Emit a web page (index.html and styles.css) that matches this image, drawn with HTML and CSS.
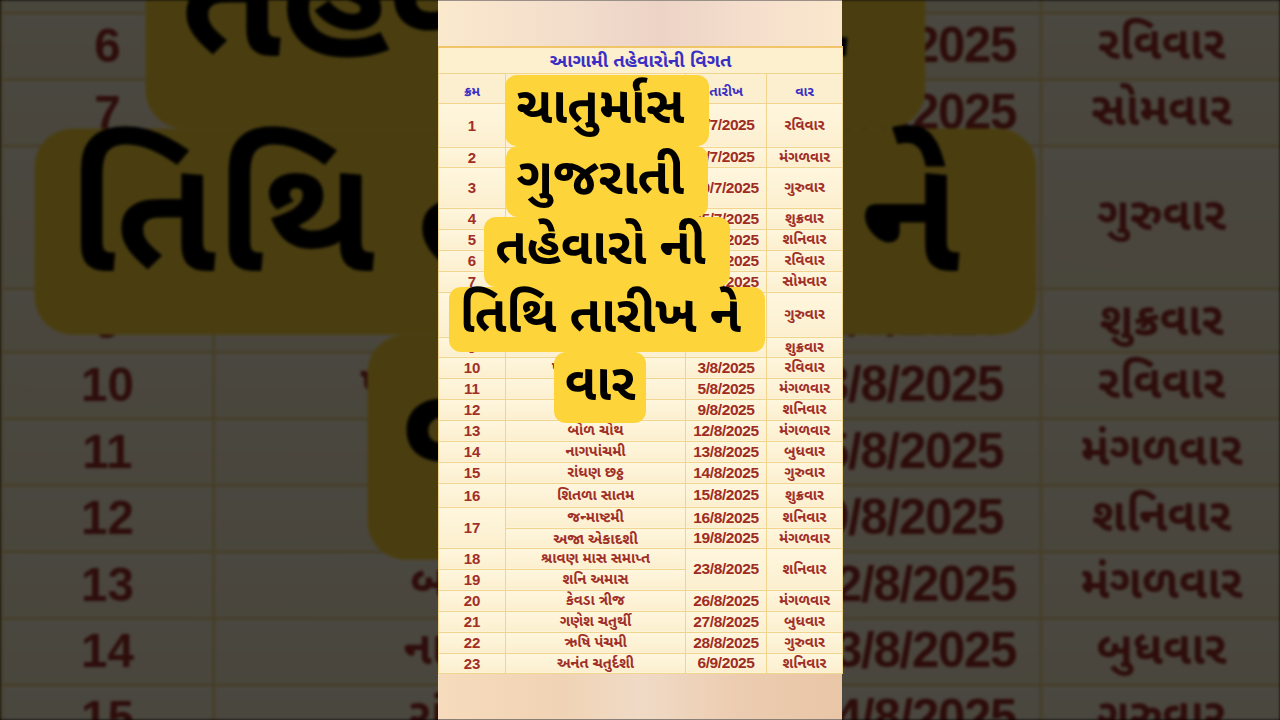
FILE: index.html
```html
<!DOCTYPE html>
<html lang="gu">
<head>
<meta charset="utf-8">
<title>ચાતુર્માસ ગુજરાતી તહેવારો</title>
<link rel="stylesheet" href="styles.css">
</head>
<body>
<div class="stage">
  <div class="backdrop" aria-hidden="true"></div>
  <div class="frame">
    <div class="glow-top"></div>
    <table class="fest">
      <colgroup><col class="c1"><col class="c2"><col class="c3"><col class="c4"></colgroup>
      <thead>
        <tr><th colspan="4" class="title">આગામી તહેવારોની વિગત</th></tr>
        <tr class="head"><th>ક્રમ</th><th>તહેવાર</th><th>તારીખ</th><th>વાર</th></tr>
      </thead>
      <tbody>
        <tr class="h44"><td>1</td><td>દેવપોઢી એકાદશી</td><td class="d">6/7/2025</td><td>રવિવાર</td></tr>
        <tr class="h20"><td>2</td><td>જયાપાર્વતી વ્રત</td><td class="d">8/7/2025</td><td>મંગળવાર</td></tr>
        <tr class="h41"><td>3</td><td>ગુરુ પૂર્ણિમા</td><td class="d">10/7/2025</td><td>ગુરુવાર</td></tr>
        <tr><td>4</td><td>દિવાસો</td><td class="d">25/7/2025</td><td>શુક્રવાર</td></tr>
        <tr><td>5</td><td>શ્રાવણ માસ પ્રારંભ</td><td class="d">26/7/2025</td><td>શનિવાર</td></tr>
        <tr><td>6</td><td>ફૂલકાજળી વ્રત</td><td class="d">27/7/2025</td><td>રવિવાર</td></tr>
        <tr><td>7</td><td>શ્રાવણ સોમવાર</td><td class="d">28/7/2025</td><td>સોમવાર</td></tr>
        <tr class="h45"><td>8</td><td>તુલસીદાસ જયંતી</td><td class="d">31/7/2025</td><td>ગુરુવાર</td></tr>
        <tr class="h20"><td>9</td><td>ગોગા નોમ</td><td class="d">1/8/2025</td><td>શુક્રવાર</td></tr>
        <tr><td>10</td><td>પવિત્રા એકાદશી</td><td class="d">3/8/2025</td><td>રવિવાર</td></tr>
        <tr><td>11</td><td>પ્રદોષ વ્રત</td><td class="d">5/8/2025</td><td>મંગળવાર</td></tr>
        <tr><td>12</td><td>રક્ષાબંધન</td><td class="d">9/8/2025</td><td>શનિવાર</td></tr>
        <tr><td>13</td><td>બોળ ચોથ</td><td class="d">12/8/2025</td><td>મંગળવાર</td></tr>
        <tr><td>14</td><td>નાગપાંચમી</td><td class="d">13/8/2025</td><td>બુધવાર</td></tr>
        <tr><td>15</td><td>રાંધણ છઠ્ઠ</td><td class="d">14/8/2025</td><td>ગુરુવાર</td></tr>
        <tr class="h24"><td>16</td><td>શિતળા સાતમ</td><td class="d">15/8/2025</td><td>શુક્રવાર</td></tr>
        <tr><td rowspan="2">17</td><td>જન્માષ્ટમી</td><td class="d">16/8/2025</td><td>શનિવાર</td></tr>
        <tr class="h20"><td>અજા એકાદશી</td><td class="d">19/8/2025</td><td>મંગળવાર</td></tr>
        <tr><td>18</td><td>શ્રાવણ માસ સમાપ્ત</td><td class="d" rowspan="2">23/8/2025</td><td rowspan="2">શનિવાર</td></tr>
        <tr><td>19</td><td>શનિ અમાસ</td></tr>
        <tr><td>20</td><td>કેવડા ત્રીજ</td><td class="d">26/8/2025</td><td>મંગળવાર</td></tr>
        <tr><td>21</td><td>ગણેશ ચતુર્થી</td><td class="d">27/8/2025</td><td>બુધવાર</td></tr>
        <tr><td>22</td><td>ઋષિ પંચમી</td><td class="d">28/8/2025</td><td>ગુરુવાર</td></tr>
        <tr class="h20"><td>23</td><td>અનંત ચતુર્દશી</td><td class="d">6/9/2025</td><td>શનિવાર</td></tr>
      </tbody>
    </table>
    <div class="glow-bottom"></div>
    <div class="caption">
      <span class="line l1">ચાતુર્માસ </span>
      <span class="line l2">ગુજરાતી </span>
      <span class="line l3">તહેવારો ની </span>
      <span class="line l4">તિથિ તારીખ ને </span>
      <span class="line l5">વાર</span>
    </div>
  </div>
</div>
<script src="script.js"></script>
</body>
</html>
```

FILE: styles.css
```css
* { box-sizing: border-box; }
html, body { margin: 0; padding: 0; }
body {
  width: 1280px;
  height: 720px;
  overflow: hidden;
  background: #000;
  font-family: "Liberation Sans", "Noto Sans Gujarati", "Lohit Gujarati", "Noto Sans", sans-serif;
}
.stage {
  position: relative;
  width: 1280px;
  height: 720px;
  overflow: hidden;
  display: flex;
  justify-content: center;
}
.backdrop {
  position: absolute;
  inset: 0;
  overflow: hidden;
  filter: blur(1.5px);
}
.backdrop::after {
  content: "";
  position: absolute;
  inset: 0;
  background: rgba(0, 0, 0, 0.71);
}
.backdrop .frame {
  position: absolute;
  left: 438px;
  top: 0;
  transform: scale(3.17);
  transform-origin: 50% 50%;
}
.frame {
  position: relative;
  width: 404px;
  height: 720px;
  display: flex;
  flex-direction: column;
  background: #f3dcc4;
}
.glow-top {
  height: 46px;
  flex: none;
  border-top: 1px solid #9a9088;
  background: linear-gradient(90deg, #fbe9cd 0%, #f2dccb 35%, #ecd3c6 55%, #f6e0cd 80%, #fae7cc 100%);
}
.glow-bottom {
  flex: 1;
  border-bottom: 1px solid #8a7f76;
  background: linear-gradient(90deg, #f6dcbc 0%, #f0d3b4 30%, #f0dac6 50%, #ecccb0 75%, #e9c6a6 100%);
}
.fest {
  width: 404px;
  border-collapse: collapse;
  table-layout: fixed;
  background: #fdf2d5;
  border-top: 2px solid #f1c46a;
}
.fest col.c1 { width: 67px; }
.fest col.c2 { width: 180px; }
.fest col.c3 { width: 81px; }
.fest col.c4 { width: 76px; }
.fest th, .fest td {
  border: 1px solid #f1d58f;
  text-align: center;
  vertical-align: middle;
  padding: 0;
  font-weight: 700;
  line-height: 1;
  white-space: nowrap;
  overflow: hidden;
}
.fest td {
  height: 21px;
  color: #a02f28;
  font-size: 14.5px;
  background: linear-gradient(180deg, #fef6de, #fcefcf);
}
.fest td.d {
  font-size: 15.5px;
  letter-spacing: -0.4px;
  color: #9d2c25;
}
.fest tbody td:first-child { font-size: 15px; }
.fest .title {
  height: 26px;
  padding-top: 2px;
  color: #3a2fc4;
  font-size: 18.5px;
  background: #fdf0cf;
}
.fest .head th {
  height: 30px;
  padding-top: 8px;
  color: #3a2fc4;
  font-size: 13.5px;
  background: #fcefcf;
}
.fest tr.h44 td { height: 44px; }
.fest tr.h41 td { height: 41px; }
.fest tr.h45 td { height: 45px; }
.fest tr.h24 td { height: 24px; }
.fest tr.h20 td { height: 20px; }

.caption {
  position: absolute;
  top: 75px;
  left: 10px;
  width: 318px;
  display: flex;
  flex-direction: column;
  align-items: center;
  font-family: "Noto Sans Gujarati", "Lohit Gujarati", "Noto Sans", sans-serif;
}
.line {
  display: block;
  height: 71px;
  line-height: 71px;
  padding: 0 11px;
  background: #fdd43a;
  color: #000;
  font-size: 51px;
  font-weight: 700;
  border-radius: 12px;
  white-space: pre;
}
.l3 { height: 70px; line-height: 70px; }
.l4 { height: 65px; line-height: 65px; }
.l5 { margin-right: 14px; }
```

FILE: script.js
```js
document.querySelector('.backdrop').appendChild(document.querySelector('.frame').cloneNode(true));
```
